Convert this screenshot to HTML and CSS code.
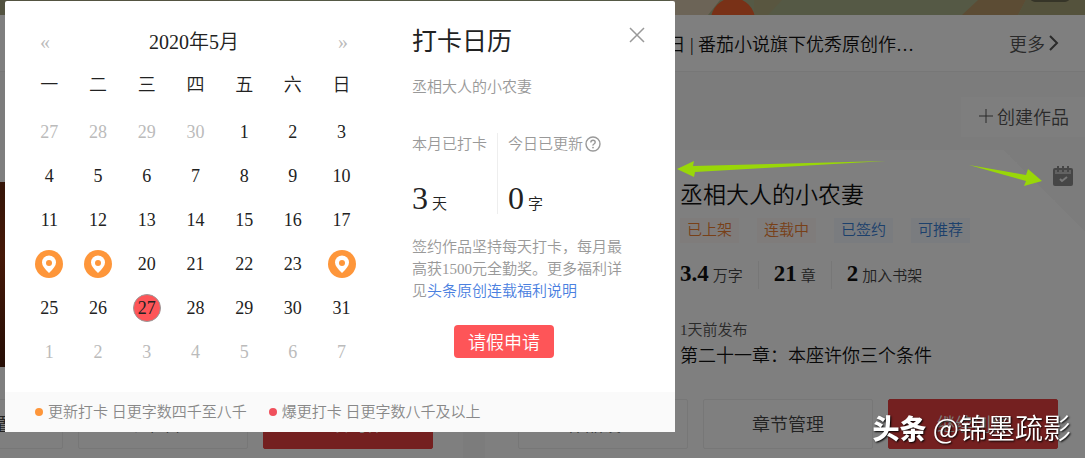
FILE: index.html
```
<!DOCTYPE html>
<html lang="zh-CN">
<head>
    <meta charset="UTF-8">
    <meta name="viewport" content="width=device-width, initial-scale=1.0">
    <title>打卡日历</title>
    <link rel="stylesheet" href="styles.css">
</head>
<body>
    <div class="page">
        <div class="banner">
            <svg width="1085" height="15" viewBox="0 0 1085 15">
                <rect width="1085" height="15" fill="#aab38a"/>
                <path d="M0 0H230L210 15H0Z" fill="#a6a682"/>
                <path d="M670 0H720L708 15H670Z" fill="#d8c8ae"/>
                <path d="M754 0H782L768 15H754Z" fill="#b3ac80"/>
                <path d="M978 0H1026L1018 15H962Z" fill="#b89868"/>
                <path d="M1026 0H1085V15H1018Z" fill="#a9a478"/>
                <circle cx="733" cy="20" r="22" fill="#f2622f"/>
                <rect x="1030" y="-8" width="40" height="10" rx="5" fill="#6c6a50"/>
            </svg>
        </div>

        <div class="notice">
            <span class="notice-text">日 | 番茄小说旗下优秀原创作…</span>
            <a href="#" class="more">更多<svg width="10" height="16" viewBox="0 0 10 16"><path d="M1 1L8 8L1 15" fill="none" stroke="currentColor" stroke-width="2"/></svg></a>
        </div>

        <div class="toolbar">
            <button type="button" class="create"><svg width="14" height="14" viewBox="0 0 14 14"><path d="M7 0V14M0 7H14" stroke="currentColor"/></svg>创建作品</button>
        </div>

        <div class="books">
            <div class="book">
                <div class="book-main">
                    <div class="cover"></div>
                </div>
                <div class="book-actions">
                    <button type="button">作品设置</button>
                    <button type="button">章节管理</button>
                    <button type="button" class="primary">继续创作</button>
                </div>
            </div>

            <div class="book">
                <div class="corner">
                    <svg width="20" height="20" viewBox="0 0 20 20">
                        <rect x="0" y="2" width="20" height="18" rx="2" fill="#8c8c8c"/>
                        <path d="M2 4H18V8H2Z" fill="#c4c4c4"/>
                        <path d="M5 0V6M10 0V6M15 0V6" stroke="#8c8c8c" stroke-width="2"/>
                        <path d="M7 13L9 15L14 11" fill="none" stroke="#eee" stroke-width="2"/>
                    </svg>
                </div>
                <div class="book-main">
                    <div class="cover"></div>
                    <div class="info">
                        <h3>丞相大人的小农妻</h3>
                        <div class="tags">
                            <span class="tag orange">已上架</span>
                            <span class="tag orange">连载中</span>
                            <span class="tag blue">已签约</span>
                            <span class="tag blue">可推荐</span>
                        </div>
                        <div class="counts">
                            <span><b>3.4</b>万字</span>
                            <span><b>21</b>章</span>
                            <span><b>2</b>加入书架</span>
                        </div>
                        <div class="published">1天前发布</div>
                        <div class="chapter">第二十一章：本座许你三个条件</div>
                    </div>
                </div>
                <div class="book-actions">
                    <button type="button">作品设置</button>
                    <button type="button">章节管理</button>
                    <button type="button" class="primary">继续创作</button>
                </div>
            </div>
        </div>
    </div>

    <div class="mask"></div>

    <div class="modal">
        <div class="modal-body">
            <div class="calendar">
                <div class="month">
                    <button type="button">«</button>
                    <span>2020年5月</span>
                    <button type="button">»</button>
                </div>
                <table>
                    <thead>
                        <tr><th>一</th><th>二</th><th>三</th><th>四</th><th>五</th><th>六</th><th>日</th></tr>
                    </thead>
                    <tbody id="days"></tbody>
                </table>
            </div>

            <div class="detail">
                <div class="detail-head">
                    <h2>打卡日历</h2>
                    <button type="button" class="close" aria-label="关闭"><svg width="16" height="16" viewBox="0 0 16 16"><path d="M1 1L15 15M15 1L1 15" stroke="#999" stroke-width="1.500"/></svg></button>
                </div>
                <p class="book-name">丞相大人的小农妻</p>
                <div class="stats">
                    <div class="stat">
                        <div class="stat-label">本月已打卡</div>
                        <div class="stat-value"><b>3</b>天</div>
                    </div>
                    <div class="stat">
                        <div class="stat-label">今日已更新<svg width="16" height="16" viewBox="0 0 16 16"><circle cx="8" cy="8" r="7" fill="none" stroke="#999" stroke-width="1.400"/><path d="M5.800 6.500Q5.800 4.300 8 4.300T10.200 6.300Q10.200 7.300 9 8T8 9.700" fill="none" stroke="#999" stroke-width="1.400"/><circle cx="8" cy="11.600" r="0.900" fill="#999"/></svg></div>
                        <div class="stat-value"><b>0</b>字</div>
                    </div>
                </div>
                <p class="rule">签约作品坚持每天打卡，每月最高获1500元全勤奖。更多福利详见<a href="#">头条原创连载福利说明</a></p>
                <button type="button" class="leave">请假申请</button>
            </div>
        </div>
        <div class="legend">
            <span class="update">更新打卡 日更字数四千至八千</span>
            <span class="burst">爆更打卡 日更字数八千及以上</span>
        </div>
    </div>

    <svg class="arrow arrow-left" width="210" height="18" viewBox="0 0 210 18"><path d="M0 9L17 1L16 6L209 1L18 12L17 17Z" fill="#99d708"/></svg>
    <svg class="arrow arrow-right" width="74" height="22" viewBox="0 0 74 22"><path d="M0 0L57 10L59 4L73 16L55 21L57 16Z" fill="#99d708"/></svg>

    <div class="watermark"><b>头条</b> @锦墨疏影</div>

    <script>
        const checked = [18, 19, 24];
        const today = 27;
        const pin = '<svg width="28" height="28" viewBox="0 0 28 28"><circle cx="14" cy="14" r="14" fill="#fe963a"/><path d="M14 23Q7 16.500 7 12.500A7 7 0 0 1 21 12.500Q21 16.500 14 23Z" fill="#fff"/><circle cx="14" cy="13" r="3" fill="#fe963a"/></svg>';
        let html = '';

        for (let row = 0; row < 6; row++) {
            html += '<tr>';
            for (let col = 0; col < 7; col++) {
                // May 1st is a Friday, so the grid starts on April 27th
                const date = new Date(2020, 3, 27 + row * 7 + col);
                const day = date.getDate();
                if (date.getMonth() !== 4) {
                    html += '<td class="other">' + day + '</td>';
                } else if (checked.includes(day)) {
                    html += '<td>' + pin + '</td>';
                } else if (day === today) {
                    html += '<td><span class="today">' + day + '</span></td>';
                } else {
                    html += '<td>' + day + '</td>';
                }
            }
            html += '</tr>';
        }
        document.getElementById('days').innerHTML = html;
    </script>
</body>
</html>
```
FILE: styles.css
```
* {
    box-sizing: border-box;
}

body {
    margin: 0;
    font-family: "Liberation Serif", "Noto Sans CJK SC", sans-serif;
    font-weight: 350;
    color: #222;
    background: #f8f8f8;
    overflow: hidden;
}

button {
    font: inherit;
    padding: 0;
    border: none;
    background: none;
    cursor: pointer;
}

h2, h3, p {
    margin: 0;
    font-weight: inherit;
}

a {
    text-decoration: none;
}

.banner {
    height: 15px;
    background: #aab38a;
    overflow: hidden;
}

.banner svg {
    display: block;
}

.notice {
    display: flex;
    align-items: center;
    justify-content: flex-end;
    gap: 95px;
    height: 57px;
    padding-right: 26px;
    background: #fff;
    border-bottom: 1px solid #eee;
    font-size: 18px;
}

.notice-text {
    color: #111;
}

.more {
    display: flex;
    align-items: center;
    gap: 4px;
    color: #555;
}

.toolbar {
    display: flex;
    justify-content: flex-end;
    padding: 25px 0 13px;
}

.create {
    display: flex;
    align-items: center;
    gap: 4px;
    height: 40px;
    padding: 0 16px 3px 18px;
    background: #fdfdfd;
    font-size: 18px;
    color: #555;
}

.books {
    display: flex;
    justify-content: flex-end;
    gap: 22px;
    margin-right: -3px;
}

.book {
    position: relative;
    flex: none;
    width: 603px;
    padding: 32px 30px 9px 33px;
    background: #fff;
    border-bottom: 1px solid #e4e4e4;
}

.corner {
    position: absolute;
    top: 0;
    right: 0;
    width: 84px;
    height: 84px;
    padding: 16px 0 0 49px;
    background: linear-gradient(45deg, #fff 50%, #f8f8f8 50%);
}

.book-main {
    display: flex;
    gap: 22px;
    height: 217px;
}

.cover {
    width: 140px;
    height: 185px;
    background: linear-gradient(#6a2a10, #8c3210 40%, #4c1c0c);
}

.info h3 {
    font-size: 23px;
    line-height: 28px;
    color: #111;
}

.tags {
    display: flex;
    gap: 18px;
    margin-top: 8px;
}

.tag {
    padding: 0 7px;
    font-size: 15px;
    line-height: 25px;
}

.orange {
    color: #f08030;
    background: #fff8f6;
}

.blue {
    color: #3880d8;
    background: #f4f9ff;
}

.counts {
    display: flex;
    margin-top: 18px;
    font-size: 15px;
    line-height: 26px;
    color: #444;
}

.counts span + span {
    margin-left: 15px;
    padding-left: 15px;
    border-left: 1px solid #eee;
}

.counts b {
    margin-right: 4px;
    font-size: 23px;
    font-weight: 700;
    color: #111;
}

.published {
    margin-top: 31px;
    font-size: 15px;
    line-height: 20px;
    color: #555;
}

.chapter {
    font-size: 18px;
    line-height: 32px;
    color: #111;
}

.book-actions {
    display: grid;
    grid-template-columns: repeat(3, 1fr);
    gap: 15px;
}

.book-actions button {
    height: 50px;
    padding-bottom: 2px;
    border: 1px solid #eee;
    border-radius: 2px;
    background: #fff;
    font-size: 18px;
    color: #444;
}

.book-actions .primary {
    border-color: #e84040;
    background: #e84040;
    color: #fff;
}

.mask {
    position: fixed;
    inset: 0;
    background: rgba(0, 0, 0, 0.5);
}

.modal {
    position: fixed;
    top: 1px;
    left: 5px;
    width: 670px;
    background: #fff;
    border-radius: 2px 2px 0 0;
}

.modal-body {
    display: flex;
    gap: 46px;
    padding: 21px 30px 18px 20px;
}

.calendar {
    width: 341px;
}

.month {
    display: flex;
    justify-content: space-between;
    padding: 0 18px 0 15px;
    font-size: 20px;
    line-height: 41px;
}

.month button {
    color: #bbb;
}

table {
    width: 100%;
    table-layout: fixed;
    border-collapse: collapse;
    font-size: 18px;
}

th, td {
    height: 44px;
    padding: 0;
    text-align: center;
    vertical-align: middle;
    font-weight: inherit;
    line-height: 28px;
}

th {
    height: 47px;
    padding-bottom: 3px;
}

td svg, .today {
    display: block;
    margin: 0 auto;
}

.other {
    color: #bbb;
}

.today {
    width: 28px;
    height: 28px;
    border: 1px solid #999;
    border-radius: 50%;
    background: #fe5558;
    line-height: 26px;
}

.detail {
    flex: 1;
}

.detail-head {
    display: flex;
    align-items: flex-start;
    justify-content: space-between;
    padding-top: 4px;
}

.detail-head h2 {
    font-size: 25px;
    font-weight: 400;
    line-height: 32px;
}

.close svg {
    display: block;
    margin-top: 1px;
}

.book-name {
    margin-top: 17px;
    font-size: 15px;
    line-height: 24px;
    color: #999;
}

.stats {
    display: flex;
    margin-top: 34px;
}

.stat + .stat {
    margin-left: 10px;
    padding-left: 10px;
    border-left: 1px solid #eee;
}

.stat-label {
    display: flex;
    align-items: center;
    gap: 2px;
    font-size: 15px;
    line-height: 22px;
    color: #999;
}

.stat-value {
    height: 32px;
    margin-top: 27px;
    font-size: 15px;
    line-height: 32px;
}

.stat-value b {
    margin-right: 4px;
    font-size: 32px;
    font-weight: 400;
}

.rule {
    width: 213px;
    margin-top: 22px;
    font-size: 15px;
    line-height: 22px;
    color: #999;
}

.rule a {
    color: #4a80e0;
}

.leave {
    display: block;
    width: 100px;
    height: 33px;
    margin: 23px 0 0 42px;
    padding-bottom: 2px;
    border-radius: 4px;
    background: #fe5558;
    font-size: 18px;
    color: #fff;
}

.legend {
    display: flex;
    gap: 22px;
    padding: 0 30px;
    background: #fafafa;
    font-size: 15px;
    line-height: 40px;
    color: #888;
}

.legend span {
    display: flex;
    align-items: center;
    gap: 5px;
}

.legend span::before {
    content: "";
    width: 8px;
    height: 8px;
    border-radius: 50%;
}

.legend .update::before {
    background: #fe963a;
}

.legend .burst::before {
    background: #f0505c;
}

.arrow {
    position: fixed;
}

.arrow-left {
    top: 160px;
    left: 677px;
}

.arrow-right {
    top: 165px;
    left: 969px;
}

.watermark {
    position: fixed;
    right: 14px;
    bottom: 10px;
    font-family: "Noto Sans CJK SC", sans-serif;
    font-size: 28px;
    font-weight: 350;
    line-height: 40px;
    color: #fff;
    text-shadow: 1px 1px 2px #000;
}

.watermark b {
    font-size: 27px;
    font-weight: 900;
}
```
